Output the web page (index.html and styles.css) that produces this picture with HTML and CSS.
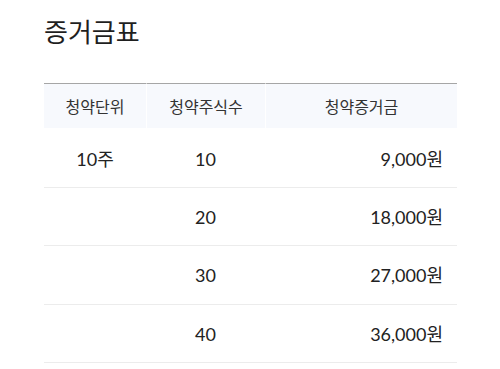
FILE: index.html
```html
<!DOCTYPE html>
<html lang="ko">
<head>
<meta charset="utf-8">
<link rel="stylesheet" href="styles.css">
</head>
<body>
<section class="margin-table">
  <h2 class="title">증거금표</h2>
  <table class="deposit">
    <colgroup>
      <col class="c-unit">
      <col class="c-qty">
      <col class="c-amt">
    </colgroup>
    <thead>
      <tr>
        <th>청약단위</th>
        <th>청약주식수</th>
        <th>청약증거금</th>
      </tr>
    </thead>
    <tbody>
      <tr class="first"><td>10주</td><td>10</td><td class="amt">9,000원</td></tr>
      <tr><td></td><td>20</td><td class="amt">18,000원</td></tr>
      <tr><td></td><td>30</td><td class="amt">27,000원</td></tr>
      <tr><td></td><td>40</td><td class="amt">36,000원</td></tr>
    </tbody>
  </table>
</section>
</body>
</html>
```

FILE: styles.css
```css
html, body {
  margin: 0;
  padding: 0;
  background: #fff;
}
body {
  font-family: Lato, "Noto Sans CJK KR", sans-serif;
  color: #222;
}
.margin-table {
  padding: 13px 43px 0 44px;
}
.title {
  margin: 0;
  font-family: "Noto Sans CJK KR", sans-serif;
  font-size: 26px;
  font-weight: 400;
  line-height: 36px;
  color: #1f1f1f;
}
.deposit {
  margin-top: 34px;
  width: 413px;
  table-layout: fixed;
  border-collapse: separate;
  border-spacing: 0;
}
.c-unit { width: 102px; }
.c-qty { width: 119px; }
.c-amt { width: 192px; }
.deposit th {
  background: #f7f9fd;
  border-top: 1px solid #a6a6a6;
  font-family: "Noto Sans CJK KR", sans-serif;
  font-size: 16px;
  font-weight: 400;
  color: #333;
  height: 45px;
  padding: 0;
  box-sizing: border-box;
  text-align: center;
  vertical-align: middle;
}
.deposit th + th {
  border-left: 1px solid #fff;
}
.deposit td {
  font-size: 18px;
  line-height: 26.33px;
  padding: 16px 0 15px;
  border-bottom: 1px solid #ececec;
  text-align: center;
  color: #222;
}
.deposit .first td {
  padding-top: 17.67px;
}
.deposit td.amt {
  text-align: right;
  padding-right: 14px;
}
```
